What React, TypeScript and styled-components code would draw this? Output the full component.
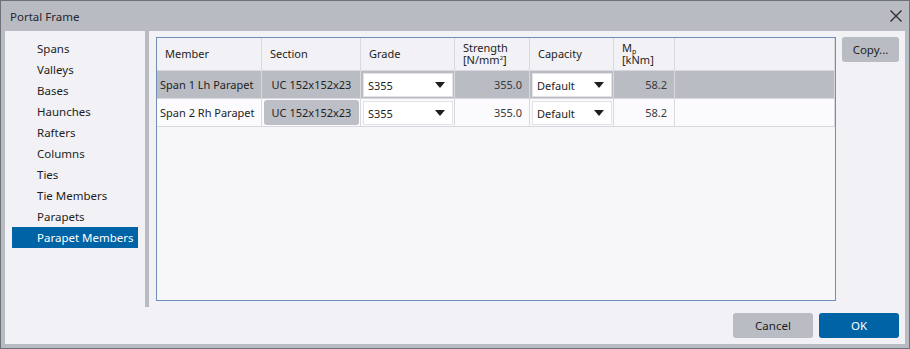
import styled, { createGlobalStyle } from "styled-components";

const GlobalStyle = createGlobalStyle`
  html, body {
    margin: 0;
    padding: 0;
    background: #ffffff;
  }
  body {
    font-family: "Noto Sans", "Open Sans", sans-serif;
    font-size: 11px;
    color: #1e1e22;
  }
`;

const Window = styled.div`
  width: 910px;
  height: 349px;
  box-sizing: border-box;
  border: 1px solid #6f7179;
  background: #b9bbc3;
  display: flex;
  flex-direction: column;
`;

const TitleBar = styled.div`
  height: 30px;
  display: flex;
  align-items: center;
  justify-content: space-between;
  padding: 0 7px 0 9px;
  .title {
    color: #26262b;
    font-size: 11.5px;
  }
`;

const Body = styled.div`
  flex: 1;
  margin: 0 4px 4px 4px;
  background: #f1f1f6;
  display: flex;
  flex-direction: column;
`;

const Top = styled.div`
  height: 276px;
  display: flex;
`;

const Nav = styled.ul`
  width: 140px;
  margin: 0;
  padding: 7px 7px 0 7px;
  box-sizing: border-box;
  list-style: none;
`;

const NavItem = styled.li<{ $selected?: boolean }>`
  height: 21px;
  line-height: 21px;
  padding-left: 25px;
  white-space: nowrap;
  font-size: 11.5px;
  background: ${(props) => (props.$selected ? "#0063a5" : "transparent")};
  color: ${(props) => (props.$selected ? "#ffffff" : "#1e1e22")};
`;

const Splitter = styled.div`
  width: 4px;
  background: #b9bbc3;
`;

const Main = styled.div`
  flex: 1;
  display: flex;
  gap: 6px;
  padding: 6px 6px 6px 7px;
`;

const Grid = styled.div`
  flex: 1;
  border: 1px solid #6f8fb6;
  background: #f7f7fa;
  display: grid;
  grid-template-columns: 105px 99px 94px 75px 84px 61px 1fr;
  grid-auto-rows: 28px;
  grid-template-rows: 33px;
  align-content: start;
`;

const HeadCell = styled.div`
  background: #f1f1f6;
  border-right: 1px solid #d8d8de;
  border-bottom: 1px solid #d8d8de;
  padding: 0 8px;
  display: flex;
  flex-direction: column;
  justify-content: center;
  line-height: 12px;
  white-space: nowrap;
  span {
    display: block;
    height: 12px;
  }
  sub {
    font-size: 7px;
    line-height: 0;
    vertical-align: -2px;
  }
  sup {
    font-size: 6px;
    line-height: 0;
    vertical-align: 4px;
  }
`;

const Cell = styled.div<{ $selected?: boolean; $align?: "left" | "right" }>`
  background: ${(props) => (props.$selected ? "#babcc3" : "#fbfbfd")};
  border-right: 1px solid #d8d8de;
  border-bottom: 1px solid #d8d8de;
  display: flex;
  align-items: center;
  justify-content: ${(props) => (props.$align === "right" ? "flex-end" : "flex-start")};
  padding: ${(props) => (props.$align === "right" ? "0 7px 0 0" : "0 0 0 3px")};
  white-space: nowrap;
  color: #1e1e22;
`;

const ValueCell = styled(Cell)`
  color: #3a3a40;
`;

const PickCell = styled(Cell)`
  padding: 1px 1px 1px 2px;
  align-items: stretch;
`;

const SectionButton = styled.div<{ $boxed?: boolean }>`
  flex: 1;
  display: flex;
  align-items: center;
  justify-content: center;
  border-radius: 3px;
  background: ${(props) => (props.$boxed ? "#bdbfc6" : "transparent")};
`;

const Select = styled.div`
  flex: 1;
  margin: 1px 0 0 0;
  background: #ffffff;
  border: 1px solid #e2e2e7;
  display: flex;
  align-items: center;
  justify-content: space-between;
  padding: 0 7px 0 4px;
  svg {
    display: block;
  }
`;

const Button = styled.button<{ $primary?: boolean }>`
  width: 80px;
  height: 25px;
  border: none;
  border-radius: 3px;
  font-family: inherit;
  font-size: 11.5px;
  background: ${(props) => (props.$primary ? "#0063a6" : "#babcc3")};
  color: ${(props) => (props.$primary ? "#ffffff" : "#1e1e22")};
  padding: 0;
`;

const CopyButton = styled(Button)`
  width: 57px;
`;

const Footer = styled.div`
  flex: 1;
  display: flex;
  justify-content: flex-end;
  align-items: center;
  gap: 6px;
  padding: 0 6px;
`;

const navItems = [
  "Spans",
  "Valleys",
  "Bases",
  "Haunches",
  "Rafters",
  "Columns",
  "Ties",
  "Tie Members",
  "Parapets",
  "Parapet Members",
];

const rows = [
  { member: "Span 1 Lh Parapet", section: "UC 152x152x23", grade: "S355", strength: "355.0", capacity: "Default", mp: "58.2" },
  { member: "Span 2 Rh Parapet", section: "UC 152x152x23", grade: "S355", strength: "355.0", capacity: "Default", mp: "58.2" },
];

function Arrow() {
  return (
    <svg width="10" height="6" viewBox="0 0 10 6">
      <path d="M0 0 L10 0 L5 6 Z" fill="#1e1e22" />
    </svg>
  );
}

function CloseIcon() {
  return (
    <svg width="12" height="12" viewBox="0 0 12 12">
      <path d="M0.5 0.5 L11.5 11.5 M11.5 0.5 L0.5 11.5" stroke="#2b2b30" strokeWidth="1.3" />
    </svg>
  );
}

export default function App() {
  return (
    <>
      <GlobalStyle />
      <Window>
        <TitleBar>
          <span className="title">Portal Frame</span>
          <CloseIcon />
        </TitleBar>
        <Body>
          <Top>
            <Nav>
              {navItems.map((item) => (
                <NavItem key={item} $selected={item === "Parapet Members"}>
                  {item}
                </NavItem>
              ))}
            </Nav>
            <Splitter />
            <Main>
              <Grid>
                <HeadCell>Member</HeadCell>
                <HeadCell>Section</HeadCell>
                <HeadCell>Grade</HeadCell>
                <HeadCell>
                  <span>Strength</span>
                  <span>
                    [N/mm<sup>2</sup>]
                  </span>
                </HeadCell>
                <HeadCell>Capacity</HeadCell>
                <HeadCell>
                  <span>
                    M<sub>p</sub>
                  </span>
                  <span>[kNm]</span>
                </HeadCell>
                <HeadCell />
                {rows.map((row, i) => {
                  const selected = i === 0;
                  return [
                    <Cell key={`m${i}`} $selected={selected}>
                      {row.member}
                    </Cell>,
                    <PickCell key={`s${i}`} $selected={selected}>
                      <SectionButton $boxed={!selected}>{row.section}</SectionButton>
                    </PickCell>,
                    <PickCell key={`g${i}`} $selected={selected}>
                      <Select>
                        <span>{row.grade}</span>
                        <Arrow />
                      </Select>
                    </PickCell>,
                    <ValueCell key={`st${i}`} $selected={selected} $align="right">
                      {row.strength}
                    </ValueCell>,
                    <PickCell key={`c${i}`} $selected={selected}>
                      <Select>
                        <span>{row.capacity}</span>
                        <Arrow />
                      </Select>
                    </PickCell>,
                    <ValueCell key={`mp${i}`} $selected={selected} $align="right">
                      {row.mp}
                    </ValueCell>,
                    <Cell key={`e${i}`} $selected={selected} />,
                  ];
                })}
              </Grid>
              <CopyButton>Copy...</CopyButton>
            </Main>
          </Top>
          <Footer>
            <Button>Cancel</Button>
            <Button $primary>OK</Button>
          </Footer>
        </Body>
      </Window>
    </>
  );
}
